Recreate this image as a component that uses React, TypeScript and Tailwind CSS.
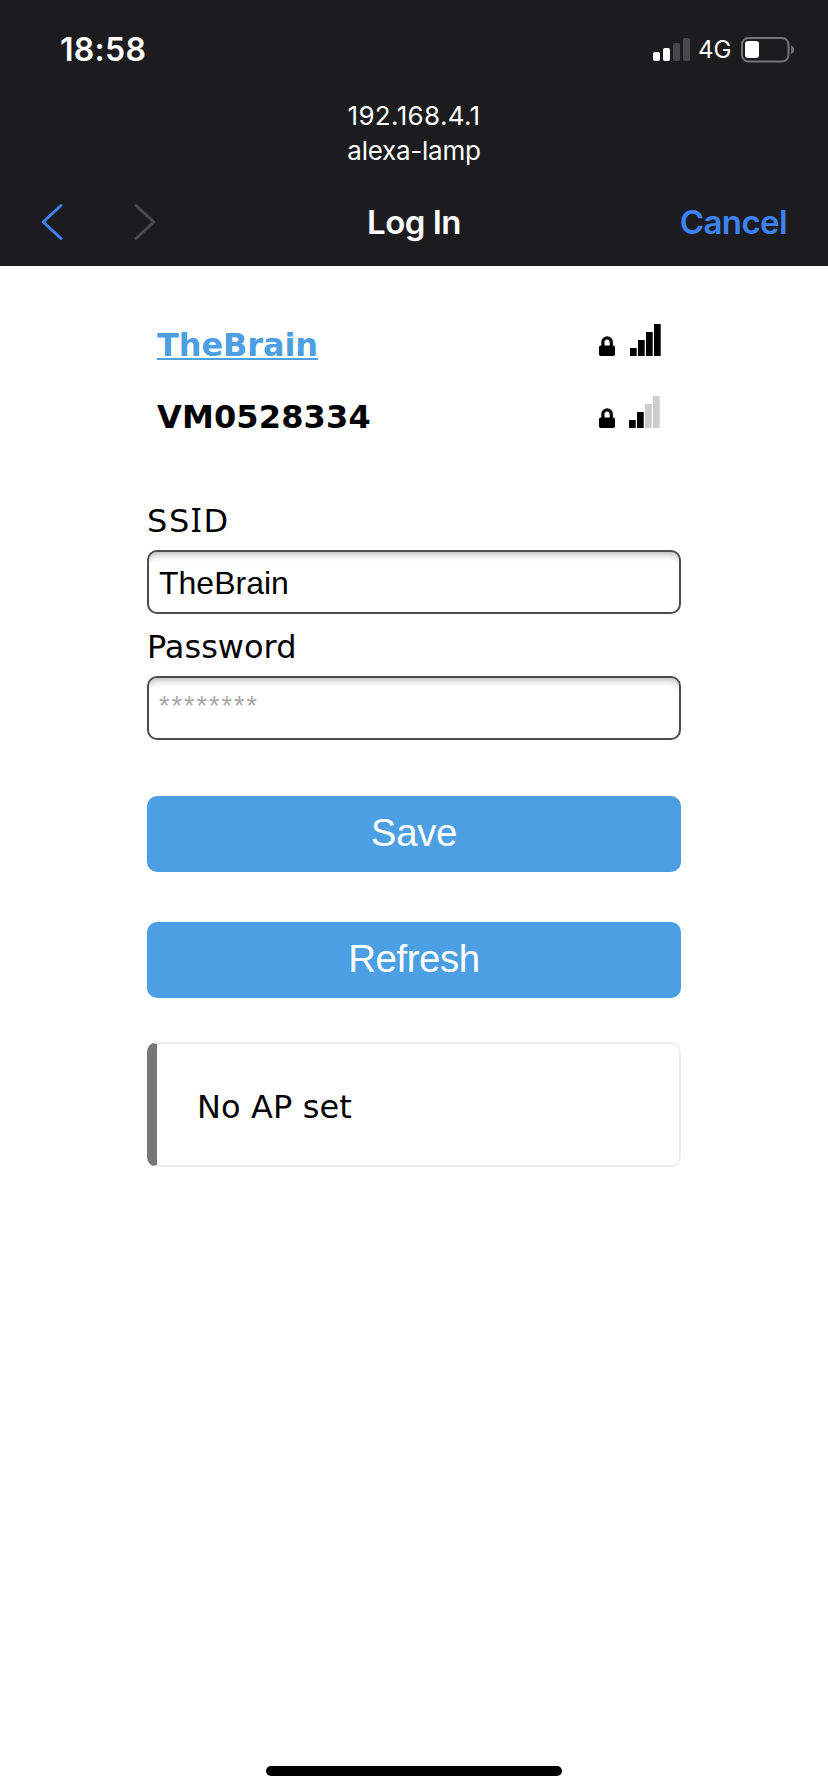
import React from "react";

const INTER = "font-['Inter','Liberation_Sans',sans-serif]";
const VERDANA = "font-['Verdana','DejaVu_Sans',sans-serif]";
const HELVETICA = "font-['Liberation_Sans',Arial,sans-serif]";

function CellularIcon() {
  return (
    <svg width="38" height="24" viewBox="0 0 38 24" className="block">
      <rect x="0" y="14" width="7" height="9" rx="2" fill="#fff" />
      <rect x="10" y="10" width="7" height="13" rx="2" fill="#fff" />
      <rect x="20" y="5" width="7" height="18" rx="2" fill="#4a4a4c" />
      <rect x="30" y="0" width="7" height="23" rx="2" fill="#4a4a4c" />
    </svg>
  );
}

function BatteryIcon() {
  return (
    <svg width="54" height="26" viewBox="0 0 54 26" className="block">
      <rect x="1" y="1" width="46.5" height="23.5" rx="6.5" fill="none" stroke="#757577" strokeWidth="2" />
      <rect x="4" y="4" width="14" height="17" rx="3" fill="#fff" />
      <path d="M50 8.5c2 .6 3.200 2.200 3.200 4.200s-1.200 3.600-3.200 4.200z" fill="#757577" />
    </svg>
  );
}

function Chevron({ direction, color }: { direction: "left" | "right"; color: string }) {
  const d = direction === "left" ? "M20 3.500L2.200 20L20 36.500" : "M2 3.500L19.800 20L2 36.500";
  return (
    <svg width="22" height="40" viewBox="0 0 22 40" fill="none" className="block">
      <path d={d} stroke={color} strokeWidth="3" strokeLinecap="round" strokeLinejoin="round" />
    </svg>
  );
}

function LockIcon() {
  return (
    <svg width="16" height="20" viewBox="0 0 16 20" className="block">
      <path d="M3.900 11V6a4.200 4.200 0 0 1 8.400 0V11" fill="none" stroke="#000" strokeWidth="3.200" />
      <rect x="0" y="9.500" width="16" height="10.500" rx="1.800" fill="#000" />
    </svg>
  );
}

function WifiBars({ level }: { level: number }) {
  return (
    <svg width="31" height="32" viewBox="0 0 31 32" className="block">
      {[0, 1, 2, 3].map((i) => (
        <rect key={i} x={i * 8} y={24 - i * 8} width="6.700" height={8 + i * 8} fill={i < level ? "#000" : "#ccc"} />
      ))}
    </svg>
  );
}

export default function App() {
  return (
    <div className="flex h-[1792px] w-[828px] flex-col bg-white text-black">
      <header className={`h-[266px] bg-[#1c1c1e] text-white ${INTER}`}>
        <div className="flex h-[99px] items-center justify-between pl-[59px] pr-[33px]">
          <span className="pl-px text-[32px] font-semibold leading-[40px] tracking-[0.3px]">18:58</span>
          <div className="flex items-center">
            <CellularIcon />
            <span className="ml-[7px] w-[43px] pt-px text-[24px] leading-[30px]">4G</span>
            <BatteryIcon />
          </div>
        </div>
        <div className="-mt-px text-center text-[26px] leading-[35px]">
          <div className="tracking-[0.35px]">192.168.4.1</div>
          <div className="tracking-[-0.25px]">alexa-lamp</div>
        </div>
        <nav className="mt-[9px] grid h-[89px] grid-cols-3 items-center pl-[41px] pr-[41px]">
          <div className="flex gap-[71px]">
            <Chevron direction="left" color="#3d82f6" />
            <Chevron direction="right" color="#4b4b4d" />
          </div>
          <h1 className="text-center text-[33px] font-semibold leading-[42px] tracking-[-0.5px]">Log In</h1>
          <button className="text-right text-[33px] font-semibold leading-[42px] tracking-[-0.6px] text-[#3d82f6]">
            Cancel
          </button>
        </nav>
      </header>

      <main className={`flex flex-1 flex-col px-[147px] pt-[43px] text-[32px] ${VERDANA}`}>
        <div className="flex h-[72px] items-center justify-between pl-[10px] pr-[20px] font-bold leading-[40px]">
          <a className="tracking-[-0.1px] text-[#4d9fe3] underline decoration-2 underline-offset-2">TheBrain</a>
          <div className="flex items-end gap-[15px] pb-[10px]">
            <LockIcon />
            <WifiBars level={4} />
          </div>
        </div>
        <div className="flex h-[72px] items-center justify-between pl-[10px] pr-[21px] font-bold leading-[40px]">
          <span className="tracking-[0.15px]">VM0528334</span>
          <div className="flex items-end gap-[14px] pb-[10px]">
            <LockIcon />
            <WifiBars level={2} />
          </div>
        </div>

        <label className="mt-[48px] h-[40px] leading-[40px] tracking-[1.6px]">
          SS<span className="font-['Noto_Sans',sans-serif] text-[32.5px] leading-none">I</span>D
        </label>
        <input
          readOnly
          value="TheBrain"
          className={`mt-[9px] h-[64px] w-full rounded-[10px] border-2 border-[#4c4c4c] px-[10px] pt-[2px] text-[32px] shadow-[inset_0_8px_6px_-5px_rgba(0,0,0,0.25)] outline-none ${HELVETICA}`}
        />
        <label className="mt-[13px] leading-[40px]">Password</label>
        <input
          readOnly
          placeholder="********"
          className={`mt-[9px] h-[64px] w-full rounded-[10px] border-2 border-[#4c4c4c] px-[10px] pb-[4px] text-[27px] tracking-[2px] shadow-[inset_0_8px_6px_-5px_rgba(0,0,0,0.25)] outline-none placeholder:text-[#a9a9a9] ${HELVETICA}`}
        />

        <button className={`mt-[56px] h-[76px] rounded-[10px] bg-[#4d9fe3] pb-[2px] text-[38.4px] leading-[44px] tracking-[-0.3px] text-white ${HELVETICA}`}>
          Save
        </button>
        <button className={`mt-[50px] h-[76px] rounded-[10px] bg-[#4d9fe3] pb-[2px] text-[38.4px] leading-[44px] tracking-[-0.4px] text-white ${HELVETICA}`}>
          Refresh
        </button>

        <div className="mt-[44px] flex h-[125px] items-center rounded-[10px] border-2 border-l-[10px] border-[#eee] border-l-[#777] pl-[40px] pt-[4px] leading-[40px] tracking-[0.1px]">
          No AP set
        </div>
      </main>

      <footer className="flex justify-center pb-[16px]">
        <div className="h-[10px] w-[296px] rounded-full bg-black" />
      </footer>
    </div>
  );
}
